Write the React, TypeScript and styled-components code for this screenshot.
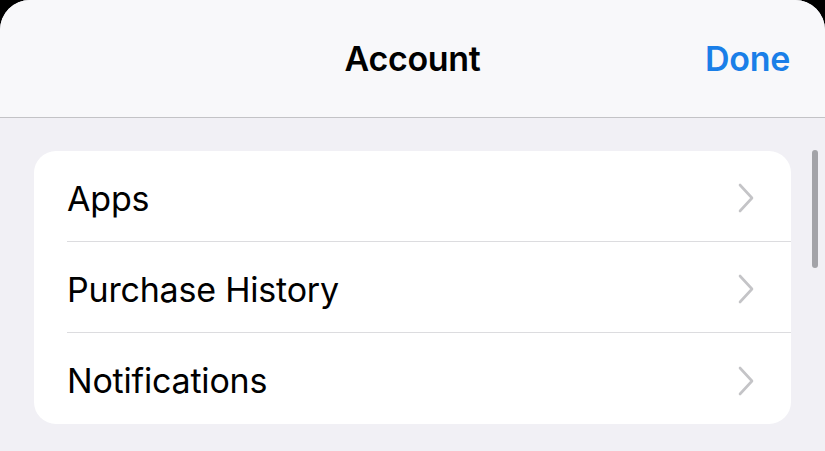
import React from "react";
import styled, { createGlobalStyle } from "styled-components";

const Global = createGlobalStyle`
  html, body { margin: 0; padding: 0; background: #000; }
  body { font-family: Inter, "Noto Sans", sans-serif; -webkit-font-smoothing: antialiased; }
  #root { width: 825px; height: 451px; overflow: hidden; }
`;

const Sheet = styled.div`
  width: 825px;
  height: 451px;
  background: #f1f0f5;
  border-radius: 30px 30px 0 0;
  overflow: hidden;
  position: relative;
  display: flex;
  flex-direction: column;
`;

const NavBar = styled.header`
  height: 118px;
  flex: none;
  box-sizing: border-box;
  background: #f8f8fa;
  border-bottom: 1px solid #c3c3c6;
  display: grid;
  grid-template-columns: 1fr auto 1fr;
  align-items: center;
  padding: 0 35px 0 35px;
`;

const Title = styled.h1`
  grid-column: 2;
  margin: 0;
  font-size: 34px;
  font-weight: 600;
  color: #000;
  letter-spacing: -0.3px;
`;

const DoneButton = styled.button`
  grid-column: 3;
  justify-self: end;
  border: none;
  background: none;
  padding: 0;
  font-family: inherit;
  font-size: 34px;
  font-weight: 600;
  color: #1a7fe8;
  letter-spacing: -0.3px;
`;

const Content = styled.main`
  padding: 33px 34px 0 34px;
`;

const Card = styled.ul`
  list-style: none;
  margin: 0;
  padding: 0 0 0 33px;
  background: #fff;
  border-radius: 22px;
`;

const Row = styled.li<{ $last?: boolean }>`
  height: 91px;
  box-sizing: border-box;
  display: flex;
  align-items: center;
  justify-content: space-between;
  padding-right: 36px;
  padding-top: 4px;
  border-bottom: ${(p) => (p.$last ? "none" : "1px solid #dcdcdf")};
`;

const Label = styled.span`
  font-size: 34px;
  font-weight: 400;
  color: #000;
  letter-spacing: -0.2px;
`;

const Chevron = styled.svg`
  width: 18px;
  height: 30px;
  flex: none;
`;

const ScrollIndicator = styled.div`
  position: absolute;
  right: 7px;
  top: 150px;
  width: 6px;
  height: 118px;
  border-radius: 3px;
  background: #a3a3a8;
`;

const items = ["Apps", "Purchase History", "Notifications"];

export default function App() {
  return (
    <>
      <Global />
      <Sheet>
        <NavBar>
          <Title>Account</Title>
          <DoneButton>Done</DoneButton>
        </NavBar>
        <Content>
          <Card>
            {items.map((t, i) => (
              <Row key={t} $last={i === items.length - 1}>
                <Label>{t}</Label>
                <Chevron viewBox="0 0 18 30">
                  <path d="M3 2 L15 15 L3 28" fill="none" stroke="#c4c4c7" strokeWidth="2.6" strokeLinecap="round" strokeLinejoin="round" />
                </Chevron>
              </Row>
            ))}
          </Card>
        </Content>
        <ScrollIndicator />
      </Sheet>
    </>
  );
}
